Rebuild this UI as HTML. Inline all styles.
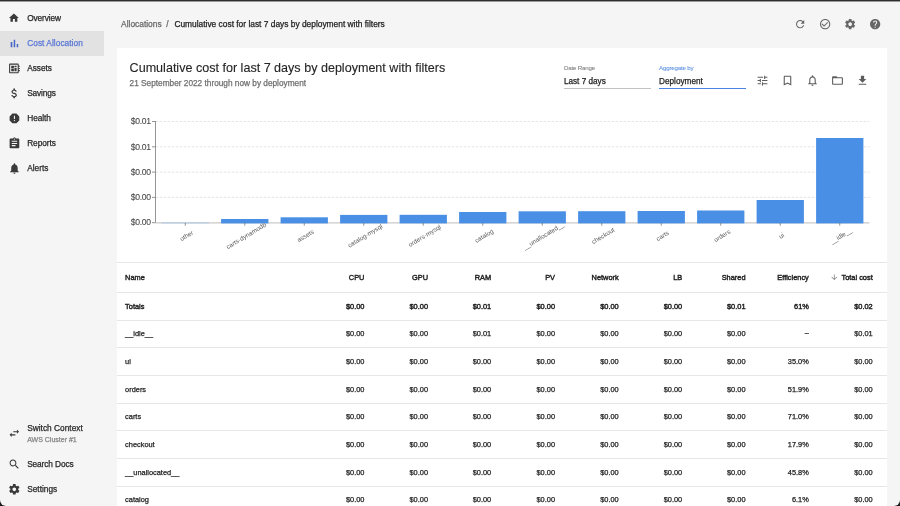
<!DOCTYPE html>
<html><head><meta charset="utf-8"><style>
html,body{margin:0;padding:0;width:900px;height:506px;overflow:hidden;background:#1a1a1a}
#root{position:absolute;will-change:transform;-webkit-font-smoothing:antialiased;left:0;top:0;width:900px;height:506px;background:#f5f5f5;border-radius:0 0 6px 6px;overflow:hidden;font-family:"Liberation Sans",sans-serif}
.t{position:absolute;white-space:nowrap;-webkit-text-stroke:0.25px currentColor}
.ic{position:absolute;overflow:visible}
.hl,.card{position:absolute}
svg text{font-family:"Liberation Sans",sans-serif}
</style></head><body><div id="root">
<div class="hl" style="left:0;top:0;width:900px;height:1px;background:#2e2e2e"></div>
<div class="hl" style="left:0;top:1px;width:900px;height:1px;background:#999"></div>
<div class="hl" style="left:0;top:31px;width:104px;height:25px;background:#e2e2e2"></div>
<svg class="ic" style="left:8.40px;top:12.10px;width:11.8px;height:11.8px;" viewBox="0 0 24 24"><path fill="#3a3a3a" d="M10 20v-6h4v6h5v-8h3L12 3 2 12h3v8z"/></svg>
<div class="t" style="left:27.20px;top:14.00px;font-size:8.3px;line-height:8.3px;color:#272727;font-weight:400;letter-spacing:-0.12px;">Overview</div>
<svg class="ic" style="left:7.85px;top:36.55px;width:12.9px;height:12.9px;" viewBox="0 0 24 24"><path fill="#4864c6" d="M5 9.2h3V19H5zM10.6 5h2.8v14h-2.8zm5.6 8H19v6h-2.8z"/></svg>
<div class="t" style="left:27.20px;top:39.00px;font-size:8.3px;line-height:8.3px;color:#5a77d6;font-weight:400;letter-spacing:0.05px;">Cost Allocation</div>
<svg class="ic" style="left:7.85px;top:61.55px;width:12.9px;height:12.9px;" viewBox="0 0 24 24"><path fill="#3a3a3a" d="M22 9V7h-2V5c0-1.1-.9-2-2-2H4c-1.1 0-2 .9-2 2v14c0 1.1.9 2 2 2h14c1.1 0 2-.9 2-2v-2h2v-2h-2v-2h2v-2h-2V9h2zm-4 10H4V5h14v14zM6 13h5v4H6zm6-6h4v3h-4zM6 7h5v5H6zm6 4h4v6h-4z"/></svg>
<div class="t" style="left:27.20px;top:64.00px;font-size:8.3px;line-height:8.3px;color:#272727;font-weight:400;letter-spacing:-0.03px;">Assets</div>
<svg class="ic" style="left:7.85px;top:86.55px;width:12.9px;height:12.9px;" viewBox="0 0 24 24"><path fill="#3a3a3a" d="M11.8 10.9c-2.27-.59-3-1.2-3-2.15 0-1.09 1.01-1.850 2.7-1.85 1.78 0 2.44.85 2.5 2.1h2.21c-.07-1.72-1.12-3.3-3.21-3.81V3h-3v2.16c-1.94.42-3.5 1.68-3.5 3.61 0 2.31 1.91 3.46 4.7 4.13 2.5.6 3 1.48 3 2.41 0 .69-.49 1.79-2.7 1.79-2.060 0-2.87-.92-2.98-2.1h-2.2c.12 2.19 1.76 3.42 3.68 3.83V21h3v-2.15c1.95-.37 3.5-1.5 3.5-3.55 0-2.84-2.43-3.81-4.7-4.4z"/></svg>
<div class="t" style="left:27.20px;top:89.00px;font-size:8.3px;line-height:8.3px;color:#272727;font-weight:400;letter-spacing:-0.14px;">Savings</div>
<svg class="ic" style="left:7.85px;top:111.55px;width:12.9px;height:12.9px;" viewBox="0 0 24 24"><path fill="#3a3a3a" d="M15.73 3H8.27L3 8.27v7.46L8.27 21h7.46L21 15.730V8.27L15.73 3zM12 17.3c-.72 0-1.3-.58-1.3-1.3 0-.72.58-1.3 1.3-1.3.72 0 1.3.58 1.3 1.3 0 .72-.58 1.3-1.3 1.3zm1-4.3h-2V7h2v6z"/></svg>
<div class="t" style="left:27.20px;top:114.00px;font-size:8.3px;line-height:8.3px;color:#272727;font-weight:400;letter-spacing:-0.04px;">Health</div>
<svg class="ic" style="left:7.85px;top:136.55px;width:12.9px;height:12.9px;" viewBox="0 0 24 24"><path fill="#3a3a3a" d="M19 3h-4.18C14.4 1.84 13.3 1 12 1c-1.3 0-2.4.84-2.82 2H5c-1.1 0-2 .9-2 2v14c0 1.1.9 2 2 2h14c1.1 0 2-.9 2-2V5c0-1.1-.9-2-2-2zm-7 0c.55 0 1 .45 1 1s-.45 1-1 1-1-.45-1-1 .45-1 1-1zm2 14H7v-2h7v2zm3-4H7v-2h10v2zm0-4H7V7h10v2z"/></svg>
<div class="t" style="left:27.20px;top:139.00px;font-size:8.3px;line-height:8.3px;color:#272727;font-weight:400;letter-spacing:-0.07px;">Reports</div>
<svg class="ic" style="left:7.85px;top:161.55px;width:12.9px;height:12.9px;" viewBox="0 0 24 24"><path fill="#3a3a3a" d="M12 22c1.1 0 2-.9 2-2h-4c0 1.1.89 2 2 2zm6-6v-5c0-3.07-1.64-5.64-4.5-6.32V4c0-.83-.67-1.5-1.5-1.5s-1.5.67-1.5 1.5v.68C7.630 5.36 6 7.92 6 11v5l-2 2v1h16v-1l-2-2z"/></svg>
<div class="t" style="left:27.20px;top:164.00px;font-size:8.3px;line-height:8.3px;color:#272727;font-weight:400;letter-spacing:0.02px;">Alerts</div>
<svg class="ic" style="left:8.00px;top:426.70px;width:12.6px;height:12.6px;" viewBox="0 0 24 24"><path fill="#3a3a3a" d="M6.99 11L3 15l3.99 4v-3H14v-2H6.99v-3zM21 9l-3.99-4v3H10v2h7.01v3L21 9z"/></svg>
<div class="t" style="left:27.20px;top:424.00px;font-size:8.3px;line-height:8.3px;color:#272727;font-weight:400;letter-spacing:0.02px;">Switch Context</div>
<div class="t" style="left:27.20px;top:436.00px;font-size:7px;line-height:7px;color:#858585;font-weight:400;">AWS Cluster #1</div>
<svg class="ic" style="left:8.00px;top:457.70px;width:12.6px;height:12.6px;" viewBox="0 0 24 24"><path fill="#3a3a3a" d="M15.5 14h-.79l-.28-.27C15.41 12.59 16 11.11 16 9.5 16 5.91 13.09 3 9.5 3S3 5.91 3 9.5 5.91 16 9.5 16c1.61 0 3.09-.59 4.23-1.57l.27.28v.79l5 4.99L20.49 19l-4.99-5zm-6 0C7.01 14 5 11.99 5 9.5S7.01 5 9.5 5 14 7.01 14 9.5 11.99 14 9.5 14z"/></svg>
<div class="t" style="left:27.20px;top:460.00px;font-size:8.3px;line-height:8.3px;color:#272727;font-weight:400;letter-spacing:-0.11px;">Search Docs</div>
<svg class="ic" style="left:8.00px;top:482.70px;width:12.6px;height:12.6px;" viewBox="0 0 24 24"><path fill="#3a3a3a" d="M19.43 12.98c.04-.32.07-.64.07-.98s-.03-.66-.07-.98l2.11-1.65c.19-.15.24-.42.12-.64l-2-3.46c-.12-.22-.39-.3-.61-.22l-2.49 1c-.52-.4-1.08-.73-1.69-.98l-.38-2.65C14.46 2.18 14.25 2 14 2h-4c-.25 0-.46.18-.49.42l-.38 2.65c-.61.25-1.17.59-1.69.98l-2.49-1c-.23-.09-.49 0-.61.22l-2 3.46c-.13.22-.07.49.12.64l2.11 1.65c-.04.32-.07.65-.07.98s.03.66.07.98l-2.11 1.650c-.19.15-.24.42-.12.64l2 3.46c.12.22.39.3.61.22l2.49-1c.52.4 1.08.73 1.69.98l.38 2.65c.03.24.24.42.49.42h4c.25 0 .46-.18.49-.42l.38-2.65c.61-.25 1.17-.59 1.69-.98l2.49 1c.23.09.49 0 .61-.22l2-3.46c.12-.22.07-.49-.12-.64l-2.11-1.65zM12 15.5c-1.93 0-3.5-1.57-3.5-3.5s1.57-3.5 3.5-3.5 3.5 1.57 3.5 3.5-1.57 3.5-3.5 3.5z"/></svg>
<div class="t" style="left:27.20px;top:485.00px;font-size:8.3px;line-height:8.3px;color:#272727;font-weight:400;">Settings</div>
<div class="t" style="left:121.10px;top:20.00px;font-size:8.4px;line-height:8.4px;color:#686868;font-weight:400;">Allocations</div>
<div class="t" style="left:166.20px;top:20.00px;font-size:8.4px;line-height:8.4px;color:#686868;font-weight:400;">/</div>
<div class="t" style="left:174.40px;top:20.00px;font-size:8.38px;line-height:8.38px;color:#222;font-weight:400;">Cumulative cost for last 7 days by deployment with filters</div>
<svg class="ic" style="left:793.55px;top:18.45px;width:12.3px;height:12.3px;" viewBox="0 0 24 24"><path fill="#666" d="M17.65 6.35C16.2 4.9 14.21 4 12 4c-4.42 0-7.99 3.58-7.99 8s3.57 8 7.99 8c3.73 0 6.84-2.55 7.73-6h-2.08c-.82 2.33-3.04 4-5.65 4-3.31 0-6-2.69-6-6s2.69-6 6-6c1.66 0 3.14.69 4.22 1.78L13 11h7V4l-2.35 2.35z"/></svg>
<svg class="ic" style="left:818.55px;top:18.45px;width:12.3px;height:12.3px;" viewBox="0 0 24 24"><path fill="#666" d="M16.59 7.58L10 14.17l-3.59-3.58L5 12l5 5 8-8zM12 2C6.48 2 2 6.48 2 12s4.48 10 10 10 10-4.48 10-10S17.52 2 12 2zm0 18c-4.42 0-8-3.58-8-8s3.58-8 8-8 8 3.58 8 8-3.58 8-8 8z"/></svg>
<svg class="ic" style="left:843.55px;top:18.45px;width:12.3px;height:12.3px;" viewBox="0 0 24 24"><path fill="#666" d="M19.43 12.98c.04-.32.07-.64.07-.98s-.03-.66-.07-.98l2.11-1.65c.19-.15.24-.42.12-.64l-2-3.46c-.12-.22-.39-.3-.61-.22l-2.49 1c-.52-.4-1.08-.73-1.69-.98l-.38-2.65C14.46 2.18 14.25 2 14 2h-4c-.25 0-.46.18-.49.42l-.38 2.65c-.61.25-1.17.59-1.69.98l-2.49-1c-.23-.09-.49 0-.61.22l-2 3.46c-.13.22-.07.49.12.64l2.11 1.65c-.04.32-.07.65-.07.98s.03.66.07.98l-2.11 1.650c-.19.15-.24.42-.12.64l2 3.46c.12.22.39.3.61.22l2.49-1c.52.4 1.08.73 1.69.98l.38 2.65c.03.24.24.42.49.42h4c.25 0 .46-.18.49-.42l.38-2.65c.61-.25 1.17-.59 1.69-.98l2.49 1c.23.09.49 0 .61-.22l2-3.46c.12-.22.07-.49-.12-.64l-2.11-1.65zM12 15.5c-1.93 0-3.5-1.57-3.5-3.5s1.57-3.5 3.5-3.5 3.5 1.57 3.5 3.5-1.57 3.5-3.5 3.5z"/></svg>
<svg class="ic" style="left:868.55px;top:18.45px;width:12.3px;height:12.3px;" viewBox="0 0 24 24"><path fill="#666" d="M12 2C6.48 2 2 6.48 2 12s4.48 10 10 10 10-4.48 10-10S17.52 2 12 2zm1 17h-2v-2h2v2zm2.07-7.75l-.9.92C13.45 12.9 13 13.5 13 15h-2v-.5c0-1.1.45-2.1 1.17-2.83l1.24-1.26c.37-.36.59-.86.59-1.41 0-1.1-.9-2-2-2s-2 .9-2 2H8c0-2.21 1.79-4 4-4s4 1.79 4 4c0 .88-.36 1.68-.93 2.25z"/></svg>
<div class="card" style="left:117px;top:48px;width:770px;height:470px;background:#fff"></div>
<div class="t" style="left:129.60px;top:62.00px;font-size:12.57px;line-height:12.57px;color:#262626;font-weight:400;-webkit-text-stroke:0.12px currentColor;">Cumulative cost for last 7 days by deployment with filters</div>
<div class="t" style="left:129.60px;top:80.00px;font-size:8.28px;line-height:8.28px;color:#707070;font-weight:400;">21 September 2022 through now by deployment</div>
<div class="t" style="left:563.90px;top:65.00px;font-size:6.2px;line-height:6.2px;color:#7a7a7a;font-weight:400;letter-spacing:-0.2px;-webkit-text-stroke:0.05px currentColor;">Date Range</div>
<div class="t" style="left:563.90px;top:78.00px;font-size:8.2px;line-height:8.2px;color:#222;font-weight:400;">Last 7 days</div>
<div class="hl" style="left:563.5px;top:88px;width:87px;height:1px;background:#c2c2c2"></div>
<div class="t" style="left:659.10px;top:65.00px;font-size:6.2px;line-height:6.2px;color:#5b8fe0;font-weight:400;letter-spacing:-0.2px;-webkit-text-stroke:0.05px currentColor;">Aggregate by</div>
<div class="t" style="left:659.10px;top:78.00px;font-size:8.2px;line-height:8.2px;color:#222;font-weight:400;">Deployment</div>
<div class="hl" style="left:659px;top:87.5px;width:87px;height:1.6px;background:#4c82e4"></div>
<svg class="ic" style="left:756.00px;top:74.00px;width:13px;height:13px;" viewBox="0 0 24 24"><path fill="#5c5c5c" d="M3 17v2h6v-2H3zM3 5v2h10V5H3zm10 16v-2h8v-2h-8v-2h-2v6h2zM7 9v2H3v2h4v2h2V9H7zm14 4v-2H11v2h10zm-6-4h2V7h4V5h-4V3h-2v6z"/></svg>
<svg class="ic" style="left:781.00px;top:74.00px;width:13px;height:13px;" viewBox="0 0 24 24"><path fill="#5c5c5c" d="M17 3H7c-1.1 0-1.99.9-1.99 2L5 21l7-3 7 3V5c0-1.1-.9-2-2-2zm0 15l-5-2.18L7 18V5h10v13z"/></svg>
<svg class="ic" style="left:806.00px;top:74.00px;width:13px;height:13px;" viewBox="0 0 24 24"><path fill="#5c5c5c" d="M12 22c1.1 0 2-.9 2-2h-4c0 1.1.9 2 2 2zm6-6v-5c0-3.07-1.63-5.64-4.5-6.32V4c0-.83-.67-1.5-1.5-1.5s-1.5.67-1.5 1.5v.68C7.64 5.36 6 7.92 6 11v5l-2 2v1h16v-1l-2-2zm-2 1H8v-6c0-2.48 1.51-4.5 4-4.5s4 2.02 4 4.5v6z"/></svg>
<svg class="ic" style="left:831.00px;top:74.00px;width:13px;height:13px;" viewBox="0 0 24 24"><path fill="#5c5c5c" d="M20 6h-8l-2-2H4c-1.1 0-1.99.9-1.99 2L2 18c0 1.1.9 2 2 2h16c1.1 0 2-.9 2-2V8c0-1.1-.9-2-2-2zm0 12H4V8h16v10z"/></svg>
<svg class="ic" style="left:856.00px;top:74.00px;width:13px;height:13px;" viewBox="0 0 24 24"><path fill="#5c5c5c" d="M19 9h-4V3H9v6H5l7 7 7-7zM5 18v2h14v-2H5z"/></svg>
<svg class="ic" style="left:0;top:0;width:900px;height:506px" viewBox="0 0 900 506"><line x1="155.5" y1="121.5" x2="869.5" y2="121.5" stroke="#e3e3e3" stroke-width="1" stroke-dasharray="2.5 1.5"/><line x1="155.5" y1="146.8" x2="869.5" y2="146.8" stroke="#e3e3e3" stroke-width="1" stroke-dasharray="2.5 1.5"/><line x1="155.5" y1="172.1" x2="869.5" y2="172.1" stroke="#e3e3e3" stroke-width="1" stroke-dasharray="2.5 1.5"/><line x1="155.5" y1="197.4" x2="869.5" y2="197.4" stroke="#e3e3e3" stroke-width="1" stroke-dasharray="2.5 1.5"/><line x1="152" y1="121.5" x2="155.5" y2="121.5" stroke="#777" stroke-width="0.8"/><text x="150.6" y="124.2" text-anchor="end" font-size="8.6" fill="#4a4a4a" letter-spacing="-0.35" stroke="#4a4a4a" stroke-width="0.1">$0.01</text><line x1="152" y1="146.8" x2="155.5" y2="146.8" stroke="#777" stroke-width="0.8"/><text x="150.6" y="149.5" text-anchor="end" font-size="8.6" fill="#4a4a4a" letter-spacing="-0.35" stroke="#4a4a4a" stroke-width="0.1">$0.01</text><line x1="152" y1="172.1" x2="155.5" y2="172.1" stroke="#777" stroke-width="0.8"/><text x="150.6" y="174.79999999999998" text-anchor="end" font-size="8.6" fill="#4a4a4a" letter-spacing="-0.35" stroke="#4a4a4a" stroke-width="0.1">$0.00</text><line x1="152" y1="197.4" x2="155.5" y2="197.4" stroke="#777" stroke-width="0.8"/><text x="150.6" y="200.1" text-anchor="end" font-size="8.6" fill="#4a4a4a" letter-spacing="-0.35" stroke="#4a4a4a" stroke-width="0.1">$0.00</text><line x1="152" y1="222.7" x2="155.5" y2="222.7" stroke="#777" stroke-width="0.8"/><text x="150.6" y="225.39999999999998" text-anchor="end" font-size="8.6" fill="#4a4a4a" letter-spacing="-0.35" stroke="#4a4a4a" stroke-width="0.1">$0.00</text><line x1="155.5" y1="121" x2="155.5" y2="223" stroke="#8a8a8a" stroke-width="0.9"/><line x1="155.5" y1="222.9" x2="869.5" y2="222.9" stroke="#c9c9c9" stroke-width="1.3"/><rect x="161.6" y="222.25" width="47.3" height="1.3" fill="#bcd0e6"/><line x1="185.25" y1="222.9" x2="185.25" y2="225.70000000000002" stroke="#777" stroke-width="0.8"/><text x="186.65" y="237.9" text-anchor="middle" font-size="6.35" fill="#5a5a5a" transform="rotate(-31 186.65 235.9)">other</text><rect x="221.10" y="219.00" width="47.3" height="4.40" fill="#4a8fe6"/><line x1="244.75" y1="222.9" x2="244.75" y2="225.70000000000002" stroke="#777" stroke-width="0.8"/><text x="246.15" y="237.9" text-anchor="middle" font-size="6.35" fill="#5a5a5a" transform="rotate(-31 246.15 235.9)">carts-dynamodb</text><rect x="280.60" y="217.30" width="47.3" height="6.10" fill="#4a8fe6"/><line x1="304.25" y1="222.9" x2="304.25" y2="225.70000000000002" stroke="#777" stroke-width="0.8"/><text x="305.65" y="237.9" text-anchor="middle" font-size="6.35" fill="#5a5a5a" transform="rotate(-31 305.65 235.9)">assets</text><rect x="340.10" y="214.90" width="47.3" height="8.50" fill="#4a8fe6"/><line x1="363.75" y1="222.9" x2="363.75" y2="225.70000000000002" stroke="#777" stroke-width="0.8"/><text x="365.15" y="237.9" text-anchor="middle" font-size="6.35" fill="#5a5a5a" transform="rotate(-31 365.15 235.9)">catalog-mysql</text><rect x="399.60" y="214.80" width="47.3" height="8.60" fill="#4a8fe6"/><line x1="423.25" y1="222.9" x2="423.25" y2="225.70000000000002" stroke="#777" stroke-width="0.8"/><text x="424.65" y="237.9" text-anchor="middle" font-size="6.35" fill="#5a5a5a" transform="rotate(-31 424.65 235.9)">orders-mysql</text><rect x="459.10" y="212.00" width="47.3" height="11.40" fill="#4a8fe6"/><line x1="482.75" y1="222.9" x2="482.75" y2="225.70000000000002" stroke="#777" stroke-width="0.8"/><text x="484.15" y="237.9" text-anchor="middle" font-size="6.35" fill="#5a5a5a" transform="rotate(-31 484.15 235.9)">catalog</text><rect x="518.60" y="211.30" width="47.3" height="12.10" fill="#4a8fe6"/><line x1="542.25" y1="222.9" x2="542.25" y2="225.70000000000002" stroke="#777" stroke-width="0.8"/><text x="543.65" y="237.9" text-anchor="middle" font-size="6.35" fill="#5a5a5a" transform="rotate(-31 543.65 235.9)">__unallocated__</text><rect x="578.10" y="211.20" width="47.3" height="12.20" fill="#4a8fe6"/><line x1="601.75" y1="222.9" x2="601.75" y2="225.70000000000002" stroke="#777" stroke-width="0.8"/><text x="603.15" y="237.9" text-anchor="middle" font-size="6.35" fill="#5a5a5a" transform="rotate(-31 603.15 235.9)">checkout</text><rect x="637.60" y="211.00" width="47.3" height="12.40" fill="#4a8fe6"/><line x1="661.25" y1="222.9" x2="661.25" y2="225.70000000000002" stroke="#777" stroke-width="0.8"/><text x="662.65" y="237.9" text-anchor="middle" font-size="6.35" fill="#5a5a5a" transform="rotate(-31 662.65 235.9)">carts</text><rect x="697.10" y="210.50" width="47.3" height="12.90" fill="#4a8fe6"/><line x1="720.75" y1="222.9" x2="720.75" y2="225.70000000000002" stroke="#777" stroke-width="0.8"/><text x="722.15" y="237.9" text-anchor="middle" font-size="6.35" fill="#5a5a5a" transform="rotate(-31 722.15 235.9)">orders</text><rect x="756.60" y="200.00" width="47.3" height="23.40" fill="#4a8fe6"/><line x1="780.25" y1="222.9" x2="780.25" y2="225.70000000000002" stroke="#777" stroke-width="0.8"/><text x="781.65" y="237.9" text-anchor="middle" font-size="6.35" fill="#5a5a5a" transform="rotate(-31 781.65 235.9)">ui</text><rect x="816.10" y="138.00" width="47.3" height="85.40" fill="#4a8fe6"/><line x1="839.75" y1="222.9" x2="839.75" y2="225.70000000000002" stroke="#777" stroke-width="0.8"/><text x="841.15" y="237.9" text-anchor="middle" font-size="6.35" fill="#5a5a5a" transform="rotate(-31 841.15 235.9)">__idle__</text></svg>
<div class="hl" style="left:117px;top:261.80px;width:770px;height:1px;background:#e6e6e6"></div>
<div class="hl" style="left:117px;top:291.80px;width:770px;height:1px;background:#e6e6e6"></div>
<div class="hl" style="left:117px;top:319.90px;width:770px;height:1px;background:#e6e6e6"></div>
<div class="hl" style="left:117px;top:346.90px;width:770px;height:1px;background:#e6e6e6"></div>
<div class="hl" style="left:117px;top:374.90px;width:770px;height:1px;background:#e6e6e6"></div>
<div class="hl" style="left:117px;top:402.50px;width:770px;height:1px;background:#e6e6e6"></div>
<div class="hl" style="left:117px;top:429.80px;width:770px;height:1px;background:#e6e6e6"></div>
<div class="hl" style="left:117px;top:457.80px;width:770px;height:1px;background:#e6e6e6"></div>
<div class="hl" style="left:117px;top:485.50px;width:770px;height:1px;background:#e6e6e6"></div>
<div class="t" style="left:125.10px;top:274.00px;font-size:7.4px;line-height:7.4px;color:#222;font-weight:400;-webkit-text-stroke:0.42px currentColor;">Name</div>
<div class="t" style="right:535.60px;top:274.00px;font-size:7.4px;line-height:7.4px;color:#222;font-weight:400;-webkit-text-stroke:0.42px currentColor;">CPU</div>
<div class="t" style="right:472.00px;top:274.00px;font-size:7.4px;line-height:7.4px;color:#222;font-weight:400;-webkit-text-stroke:0.42px currentColor;">GPU</div>
<div class="t" style="right:408.80px;top:274.00px;font-size:7.4px;line-height:7.4px;color:#222;font-weight:400;-webkit-text-stroke:0.42px currentColor;">RAM</div>
<div class="t" style="right:345.00px;top:274.00px;font-size:7.4px;line-height:7.4px;color:#222;font-weight:400;-webkit-text-stroke:0.42px currentColor;">PV</div>
<div class="t" style="right:281.30px;top:274.00px;font-size:7.4px;line-height:7.4px;color:#222;font-weight:400;-webkit-text-stroke:0.42px currentColor;">Network</div>
<div class="t" style="right:217.80px;top:274.00px;font-size:7.4px;line-height:7.4px;color:#222;font-weight:400;-webkit-text-stroke:0.42px currentColor;">LB</div>
<div class="t" style="right:154.50px;top:274.00px;font-size:7.4px;line-height:7.4px;color:#222;font-weight:400;-webkit-text-stroke:0.42px currentColor;">Shared</div>
<div class="t" style="right:91.20px;top:274.00px;font-size:7.4px;line-height:7.4px;color:#222;font-weight:400;-webkit-text-stroke:0.42px currentColor;">Efficiency</div>
<div class="t" style="right:27.30px;top:274.00px;font-size:7.4px;line-height:7.4px;color:#222;font-weight:400;-webkit-text-stroke:0.42px currentColor;">Total cost</div>
<svg class="ic" style="left:830.05px;top:273.35px;width:8.5px;height:8.5px;" viewBox="0 0 24 24"><path fill="#777" d="M20 12l-1.41-1.41L13 16.17V4h-2v12.17l-5.58-5.59L4 12l8 8 8-8z"/></svg>
<div class="t" style="left:125.10px;top:303.00px;font-size:7.4px;line-height:7.4px;color:#222;font-weight:400;-webkit-text-stroke:0.42px currentColor;">Totals</div>
<div class="t" style="right:535.60px;top:303.00px;font-size:7.4px;line-height:7.4px;color:#222;font-weight:400;-webkit-text-stroke:0.42px currentColor;">$0.00</div>
<div class="t" style="right:472.00px;top:303.00px;font-size:7.4px;line-height:7.4px;color:#222;font-weight:400;-webkit-text-stroke:0.42px currentColor;">$0.00</div>
<div class="t" style="right:408.80px;top:303.00px;font-size:7.4px;line-height:7.4px;color:#222;font-weight:400;-webkit-text-stroke:0.42px currentColor;">$0.01</div>
<div class="t" style="right:345.00px;top:303.00px;font-size:7.4px;line-height:7.4px;color:#222;font-weight:400;-webkit-text-stroke:0.42px currentColor;">$0.00</div>
<div class="t" style="right:281.30px;top:303.00px;font-size:7.4px;line-height:7.4px;color:#222;font-weight:400;-webkit-text-stroke:0.42px currentColor;">$0.00</div>
<div class="t" style="right:217.80px;top:303.00px;font-size:7.4px;line-height:7.4px;color:#222;font-weight:400;-webkit-text-stroke:0.42px currentColor;">$0.00</div>
<div class="t" style="right:154.50px;top:303.00px;font-size:7.4px;line-height:7.4px;color:#222;font-weight:400;-webkit-text-stroke:0.42px currentColor;">$0.01</div>
<div class="t" style="right:91.20px;top:303.00px;font-size:7.4px;line-height:7.4px;color:#222;font-weight:400;-webkit-text-stroke:0.42px currentColor;">61%</div>
<div class="t" style="right:27.30px;top:303.00px;font-size:7.4px;line-height:7.4px;color:#222;font-weight:400;-webkit-text-stroke:0.42px currentColor;">$0.02</div>
<div class="t" style="left:125.10px;top:330.00px;font-size:7.4px;line-height:7.4px;color:#222;font-weight:400;">__idle__</div>
<div class="t" style="right:535.60px;top:330.00px;font-size:7.4px;line-height:7.4px;color:#222;font-weight:400;">$0.00</div>
<div class="t" style="right:472.00px;top:330.00px;font-size:7.4px;line-height:7.4px;color:#222;font-weight:400;">$0.00</div>
<div class="t" style="right:408.80px;top:330.00px;font-size:7.4px;line-height:7.4px;color:#222;font-weight:400;">$0.01</div>
<div class="t" style="right:345.00px;top:330.00px;font-size:7.4px;line-height:7.4px;color:#222;font-weight:400;">$0.00</div>
<div class="t" style="right:281.30px;top:330.00px;font-size:7.4px;line-height:7.4px;color:#222;font-weight:400;">$0.00</div>
<div class="t" style="right:217.80px;top:330.00px;font-size:7.4px;line-height:7.4px;color:#222;font-weight:400;">$0.00</div>
<div class="t" style="right:154.50px;top:330.00px;font-size:7.4px;line-height:7.4px;color:#222;font-weight:400;">$0.00</div>
<div class="t" style="right:91.20px;top:330.00px;font-size:7.4px;line-height:7.4px;color:#222;font-weight:400;"><span style="position:relative;top:-1px">–</span></div>
<div class="t" style="right:27.30px;top:330.00px;font-size:7.4px;line-height:7.4px;color:#222;font-weight:400;">$0.01</div>
<div class="t" style="left:125.10px;top:358.00px;font-size:7.4px;line-height:7.4px;color:#222;font-weight:400;">ui</div>
<div class="t" style="right:535.60px;top:358.00px;font-size:7.4px;line-height:7.4px;color:#222;font-weight:400;">$0.00</div>
<div class="t" style="right:472.00px;top:358.00px;font-size:7.4px;line-height:7.4px;color:#222;font-weight:400;">$0.00</div>
<div class="t" style="right:408.80px;top:358.00px;font-size:7.4px;line-height:7.4px;color:#222;font-weight:400;">$0.00</div>
<div class="t" style="right:345.00px;top:358.00px;font-size:7.4px;line-height:7.4px;color:#222;font-weight:400;">$0.00</div>
<div class="t" style="right:281.30px;top:358.00px;font-size:7.4px;line-height:7.4px;color:#222;font-weight:400;">$0.00</div>
<div class="t" style="right:217.80px;top:358.00px;font-size:7.4px;line-height:7.4px;color:#222;font-weight:400;">$0.00</div>
<div class="t" style="right:154.50px;top:358.00px;font-size:7.4px;line-height:7.4px;color:#222;font-weight:400;">$0.00</div>
<div class="t" style="right:91.20px;top:358.00px;font-size:7.4px;line-height:7.4px;color:#222;font-weight:400;">35.0%</div>
<div class="t" style="right:27.30px;top:358.00px;font-size:7.4px;line-height:7.4px;color:#222;font-weight:400;">$0.00</div>
<div class="t" style="left:125.10px;top:386.00px;font-size:7.4px;line-height:7.4px;color:#222;font-weight:400;">orders</div>
<div class="t" style="right:535.60px;top:386.00px;font-size:7.4px;line-height:7.4px;color:#222;font-weight:400;">$0.00</div>
<div class="t" style="right:472.00px;top:386.00px;font-size:7.4px;line-height:7.4px;color:#222;font-weight:400;">$0.00</div>
<div class="t" style="right:408.80px;top:386.00px;font-size:7.4px;line-height:7.4px;color:#222;font-weight:400;">$0.00</div>
<div class="t" style="right:345.00px;top:386.00px;font-size:7.4px;line-height:7.4px;color:#222;font-weight:400;">$0.00</div>
<div class="t" style="right:281.30px;top:386.00px;font-size:7.4px;line-height:7.4px;color:#222;font-weight:400;">$0.00</div>
<div class="t" style="right:217.80px;top:386.00px;font-size:7.4px;line-height:7.4px;color:#222;font-weight:400;">$0.00</div>
<div class="t" style="right:154.50px;top:386.00px;font-size:7.4px;line-height:7.4px;color:#222;font-weight:400;">$0.00</div>
<div class="t" style="right:91.20px;top:386.00px;font-size:7.4px;line-height:7.4px;color:#222;font-weight:400;">51.9%</div>
<div class="t" style="right:27.30px;top:386.00px;font-size:7.4px;line-height:7.4px;color:#222;font-weight:400;">$0.00</div>
<div class="t" style="left:125.10px;top:413.00px;font-size:7.4px;line-height:7.4px;color:#222;font-weight:400;">carts</div>
<div class="t" style="right:535.60px;top:413.00px;font-size:7.4px;line-height:7.4px;color:#222;font-weight:400;">$0.00</div>
<div class="t" style="right:472.00px;top:413.00px;font-size:7.4px;line-height:7.4px;color:#222;font-weight:400;">$0.00</div>
<div class="t" style="right:408.80px;top:413.00px;font-size:7.4px;line-height:7.4px;color:#222;font-weight:400;">$0.00</div>
<div class="t" style="right:345.00px;top:413.00px;font-size:7.4px;line-height:7.4px;color:#222;font-weight:400;">$0.00</div>
<div class="t" style="right:281.30px;top:413.00px;font-size:7.4px;line-height:7.4px;color:#222;font-weight:400;">$0.00</div>
<div class="t" style="right:217.80px;top:413.00px;font-size:7.4px;line-height:7.4px;color:#222;font-weight:400;">$0.00</div>
<div class="t" style="right:154.50px;top:413.00px;font-size:7.4px;line-height:7.4px;color:#222;font-weight:400;">$0.00</div>
<div class="t" style="right:91.20px;top:413.00px;font-size:7.4px;line-height:7.4px;color:#222;font-weight:400;">71.0%</div>
<div class="t" style="right:27.30px;top:413.00px;font-size:7.4px;line-height:7.4px;color:#222;font-weight:400;">$0.00</div>
<div class="t" style="left:125.10px;top:441.00px;font-size:7.4px;line-height:7.4px;color:#222;font-weight:400;">checkout</div>
<div class="t" style="right:535.60px;top:441.00px;font-size:7.4px;line-height:7.4px;color:#222;font-weight:400;">$0.00</div>
<div class="t" style="right:472.00px;top:441.00px;font-size:7.4px;line-height:7.4px;color:#222;font-weight:400;">$0.00</div>
<div class="t" style="right:408.80px;top:441.00px;font-size:7.4px;line-height:7.4px;color:#222;font-weight:400;">$0.00</div>
<div class="t" style="right:345.00px;top:441.00px;font-size:7.4px;line-height:7.4px;color:#222;font-weight:400;">$0.00</div>
<div class="t" style="right:281.30px;top:441.00px;font-size:7.4px;line-height:7.4px;color:#222;font-weight:400;">$0.00</div>
<div class="t" style="right:217.80px;top:441.00px;font-size:7.4px;line-height:7.4px;color:#222;font-weight:400;">$0.00</div>
<div class="t" style="right:154.50px;top:441.00px;font-size:7.4px;line-height:7.4px;color:#222;font-weight:400;">$0.00</div>
<div class="t" style="right:91.20px;top:441.00px;font-size:7.4px;line-height:7.4px;color:#222;font-weight:400;">17.9%</div>
<div class="t" style="right:27.30px;top:441.00px;font-size:7.4px;line-height:7.4px;color:#222;font-weight:400;">$0.00</div>
<div class="t" style="left:125.10px;top:469.00px;font-size:7.4px;line-height:7.4px;color:#222;font-weight:400;">__unallocated__</div>
<div class="t" style="right:535.60px;top:469.00px;font-size:7.4px;line-height:7.4px;color:#222;font-weight:400;">$0.00</div>
<div class="t" style="right:472.00px;top:469.00px;font-size:7.4px;line-height:7.4px;color:#222;font-weight:400;">$0.00</div>
<div class="t" style="right:408.80px;top:469.00px;font-size:7.4px;line-height:7.4px;color:#222;font-weight:400;">$0.00</div>
<div class="t" style="right:345.00px;top:469.00px;font-size:7.4px;line-height:7.4px;color:#222;font-weight:400;">$0.00</div>
<div class="t" style="right:281.30px;top:469.00px;font-size:7.4px;line-height:7.4px;color:#222;font-weight:400;">$0.00</div>
<div class="t" style="right:217.80px;top:469.00px;font-size:7.4px;line-height:7.4px;color:#222;font-weight:400;">$0.00</div>
<div class="t" style="right:154.50px;top:469.00px;font-size:7.4px;line-height:7.4px;color:#222;font-weight:400;">$0.00</div>
<div class="t" style="right:91.20px;top:469.00px;font-size:7.4px;line-height:7.4px;color:#222;font-weight:400;">45.8%</div>
<div class="t" style="right:27.30px;top:469.00px;font-size:7.4px;line-height:7.4px;color:#222;font-weight:400;">$0.00</div>
<div class="t" style="left:125.10px;top:496.00px;font-size:7.4px;line-height:7.4px;color:#222;font-weight:400;">catalog</div>
<div class="t" style="right:535.60px;top:496.00px;font-size:7.4px;line-height:7.4px;color:#222;font-weight:400;">$0.00</div>
<div class="t" style="right:472.00px;top:496.00px;font-size:7.4px;line-height:7.4px;color:#222;font-weight:400;">$0.00</div>
<div class="t" style="right:408.80px;top:496.00px;font-size:7.4px;line-height:7.4px;color:#222;font-weight:400;">$0.00</div>
<div class="t" style="right:345.00px;top:496.00px;font-size:7.4px;line-height:7.4px;color:#222;font-weight:400;">$0.00</div>
<div class="t" style="right:281.30px;top:496.00px;font-size:7.4px;line-height:7.4px;color:#222;font-weight:400;">$0.00</div>
<div class="t" style="right:217.80px;top:496.00px;font-size:7.4px;line-height:7.4px;color:#222;font-weight:400;">$0.00</div>
<div class="t" style="right:154.50px;top:496.00px;font-size:7.4px;line-height:7.4px;color:#222;font-weight:400;">$0.00</div>
<div class="t" style="right:91.20px;top:496.00px;font-size:7.4px;line-height:7.4px;color:#222;font-weight:400;">6.1%</div>
<div class="t" style="right:27.30px;top:496.00px;font-size:7.4px;line-height:7.4px;color:#222;font-weight:400;">$0.00</div>
</div></body></html>
